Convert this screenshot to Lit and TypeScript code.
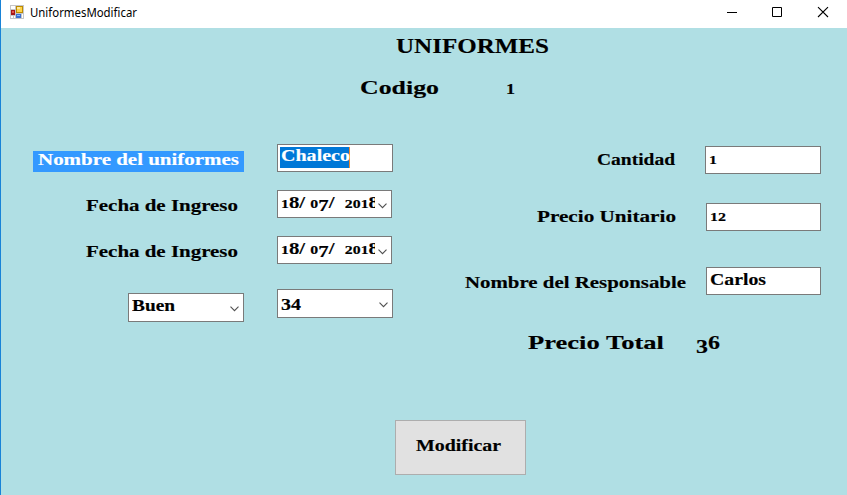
import { LitElement, html, svg, css } from "lit";
import { customElement, property } from "lit/decorators.js";

const BASELINE = 17;

/** One line of text set to an exact width, with old-style figures on request. */
@customElement("fit-text")
class FitText extends LitElement {
  @property() text = "";
  @property({ type: Number }) width = 50;
  @property({ type: Number }) size = 16.5;
  @property() face = "serif";

  static styles = css`
    :host { display: block; height: 24px; flex: none; }
    svg { display: block; overflow: visible; }
    text { fill: currentColor; white-space: pre; }
    .serif { font-family: "Liberation Serif", serif; font-weight: 700; stroke: currentColor; stroke-width: 0.15px; }
    .sans { font-family: "Noto Sans", sans-serif; }
  `;

  private glyphs() {
    if (this.face !== "serif" || !/\d/.test(this.text)) return this.text;
    let shift = 0;
    return [...this.text].map((c) => {
      const drop = /[34579]/.test(c) ? this.size * 0.21 : 0;
      const size = /[012]/.test(c) ? this.size * 0.76 : this.size;
      const dy = drop - shift;
      shift = drop;
      return svg`<tspan dy=${dy} font-size=${size}>${c}</tspan>`;
    });
  }

  render() {
    return html`<svg width=${this.width} height="24">${svg`<text class=${this.face} x="0" y=${BASELINE}
      font-size=${this.size} textLength=${this.width} lengthAdjust="spacingAndGlyphs">${this.glyphs()}</text>`}</svg>`;
  }
}

@customElement("form-field")
class FormField extends LitElement {
  @property() value = "";
  @property({ type: Number }) width = 50;
  @property({ type: Boolean }) dropdown = false;
  @property({ type: Boolean }) selected = false;

  static styles = css`
    :host {
      display: flex; box-sizing: border-box; width: 116px; height: 28px; flex: none;
      background: #fff; border: 1px solid #7a7a7a; padding-left: 3px; overflow: hidden;
    }
    .text { flex: 1; min-width: 0; overflow: hidden; padding-top: var(--text-top, 0px); }
    .marked { box-sizing: border-box; width: 70px; height: 21px; margin: 2px 0 0 -1px; padding-left: 1px;
      background: #0078d7; color: #fff; border-right: 1px solid #f08a30; }
    .marked fit-text { margin-top: -3px; }
    .chevron { flex: none; width: 9px; height: 6px; margin: var(--chevron-top, 12px) 4px 0 3px; }
  `;

  render() {
    const line = html`<fit-text .text=${this.value} .width=${this.width}></fit-text>`;
    return html`
      ${this.selected ? html`<div class="marked">${line}</div>` : html`<div class="text">${line}</div>`}
      ${this.dropdown
        ? html`<svg class="chevron" viewBox="0 0 9 6"><path d="M.5 .7 4.5 4.7 8.5 .7" fill="none" stroke="#505050" stroke-width="1.1" /></svg>`
        : ""}
    `;
  }
}

@customElement("app-root")
class AppRoot extends LitElement {
  static styles = css`
    :host {
      display: flex; flex-direction: column; box-sizing: border-box; width: 847px; height: 495px;
      background: #b0dfe4; border-left: 1px solid #1883d7; color: #000; overflow: hidden;
    }
    .titlebar { display: flex; height: 28px; flex: none; background: #fff; }
    .app-icon { width: 14px; height: 14px; margin: 5px 6px 0 9px; }
    .titlebar fit-text { margin-top: 0; }
    .controls { display: flex; margin-left: auto; }
    .controls svg { width: 46px; height: 28px; }
    .heading { display: flex; margin: 8px 0 0 395px; }
    .code { display: flex; gap: 67px; margin: 17px 0 0 359px; }
    .columns { display: flex; height: 182px; margin-top: 43px; }
    .left { width: 392px; }
    .right { width: 428px; padding-top: 2px; box-sizing: border-box; }
    .row { display: flex; justify-content: flex-end; gap: 39px; }
    .r1, .r2 { height: 46px; }
    .r3 { height: 53px; }
    .r1 { gap: 33px; }
    .row > fit-text { margin-top: 4px; }
    .highlight { display: flex; box-sizing: border-box; width: 211px; height: 21px; margin-top: 7px; padding-left: 5px; background: #3399ff; color: #fff; }
    .highlight fit-text { margin-top: -3px; }
    .date { width: 115px; margin-right: 1px; --text-top: 0px; --chevron-top: 12px; }
    .date { --text-top: -1px; }
    .r4 { gap: 33px; }
    .combo { height: 29px; }
    .quality { margin-top: 4px; }
    .quality { --text-top: -1px; }
    .r5 { height: 57px; gap: 30px; }
    .r5 > fit-text, .r6 > fit-text { margin-top: 2px; }
    .r6 { height: 64px; gap: 30px; }
    .r7 { gap: 20px; }
    .r6 form-field, .r7 form-field { width: 115px; }
    .r5 form-field, .r6 form-field { --text-top: -1px; }
    .right .r7 form-field { --text-top: -1px; }
    .quantity { --text-top: 0px; }
    .total { display: flex; gap: 32px; margin: 6px 0 0 527px; }
    button {
      display: flex; justify-content: center; box-sizing: border-box; width: 131px; height: 55px;
      margin: 64px 0 0 394px; padding: 13px 4px 0 0; border: 1px solid #adadad; background: #e1e1e1; color: #000;
    }
  `;

  render() {
    return html`
      <div class="titlebar">
        <svg class="app-icon" viewBox="0 0 14 14">
          <path d="M0 0h14v14H0z" fill="#c6c6c8" />
          <path d="M1 1h4v3H1zM1 11h2v2H1zM4 11h1v2H4zM12 9h1v4h-1z" fill="#fff" />
          <path d="M1 5h4v5H1z" fill="#a71818" /><path d="M2 6h2v2H2z" fill="#e4574a" />
          <path d="M6 1h7v7H6z" fill="#bd8b00" /><path d="M7 2h5v5H7z" fill="#ffd44b" /><path d="M7 2h3v2H7z" fill="#ffeaa0" />
          <path d="M6 9h5v4H6z" fill="#3a70d0" /><path d="M7 10h3v1H7z" fill="#8ab8ff" />
        </svg>
        <fit-text face="sans" text="UniformesModificar" width="107" size="11.7"></fit-text>
        <div class="controls">
          <svg viewBox="0 0 46 28"><path d="M18 12.5h10" stroke="#000" /></svg>
          <svg viewBox="0 0 46 28"><path d="M17.5 7.5h9v9h-9z" fill="none" stroke="#000" /></svg>
          <svg viewBox="0 0 46 28"><path d="M17 7.2l10 9.8M27 7.2l-10 9.8" stroke="#000" stroke-width="1.1" /></svg>
        </div>
      </div>
      <div class="heading"><fit-text text="UNIFORMES" width="153" size="20.5"></fit-text></div>
      <div class="code">
        <fit-text text="Codigo" width="79" size="19.5"></fit-text>
        <fit-text text="1" width="9" size="19.5"></fit-text>
      </div>
      <div class="columns">
        <div class="left">
          <div class="row r1">
            <div class="highlight"><fit-text text="Nombre del uniformes" width="201"></fit-text></div>
            <form-field value="Chaleco" width="69" selected></form-field>
          </div>
          <div class="row r2">
            <fit-text text="Fecha de Ingreso" width="152"></fit-text>
            <form-field class="date" value="18/ 07/  2018" width="98" dropdown></form-field>
          </div>
          <div class="row r3">
            <fit-text text="Fecha de Ingreso" width="152"></fit-text>
            <form-field class="date" value="18/ 07/  2018" width="98" dropdown></form-field>
          </div>
          <div class="row r4">
            <form-field class="combo quality" value="Buen" width="43" dropdown></form-field>
            <form-field class="combo" value="34" width="20" dropdown></form-field>
          </div>
        </div>
        <div class="right">
          <div class="row r5">
            <fit-text text="Cantidad" width="78"></fit-text>
            <form-field value="1" width="8"></form-field>
          </div>
          <div class="row r6">
            <fit-text text="Precio Unitario" width="139"></fit-text>
            <form-field value="12" width="16"></form-field>
          </div>
          <div class="row r7">
            <fit-text text="Nombre del Responsable" width="221"></fit-text>
            <form-field value="Carlos" width="56"></form-field>
          </div>
        </div>
      </div>
      <div class="total">
        <fit-text text="Precio Total" width="136" size="19"></fit-text>
        <fit-text text="36" width="24" size="19"></fit-text>
      </div>
      <button><fit-text text="Modificar" width="85"></fit-text></button>
    `;
  }
}
